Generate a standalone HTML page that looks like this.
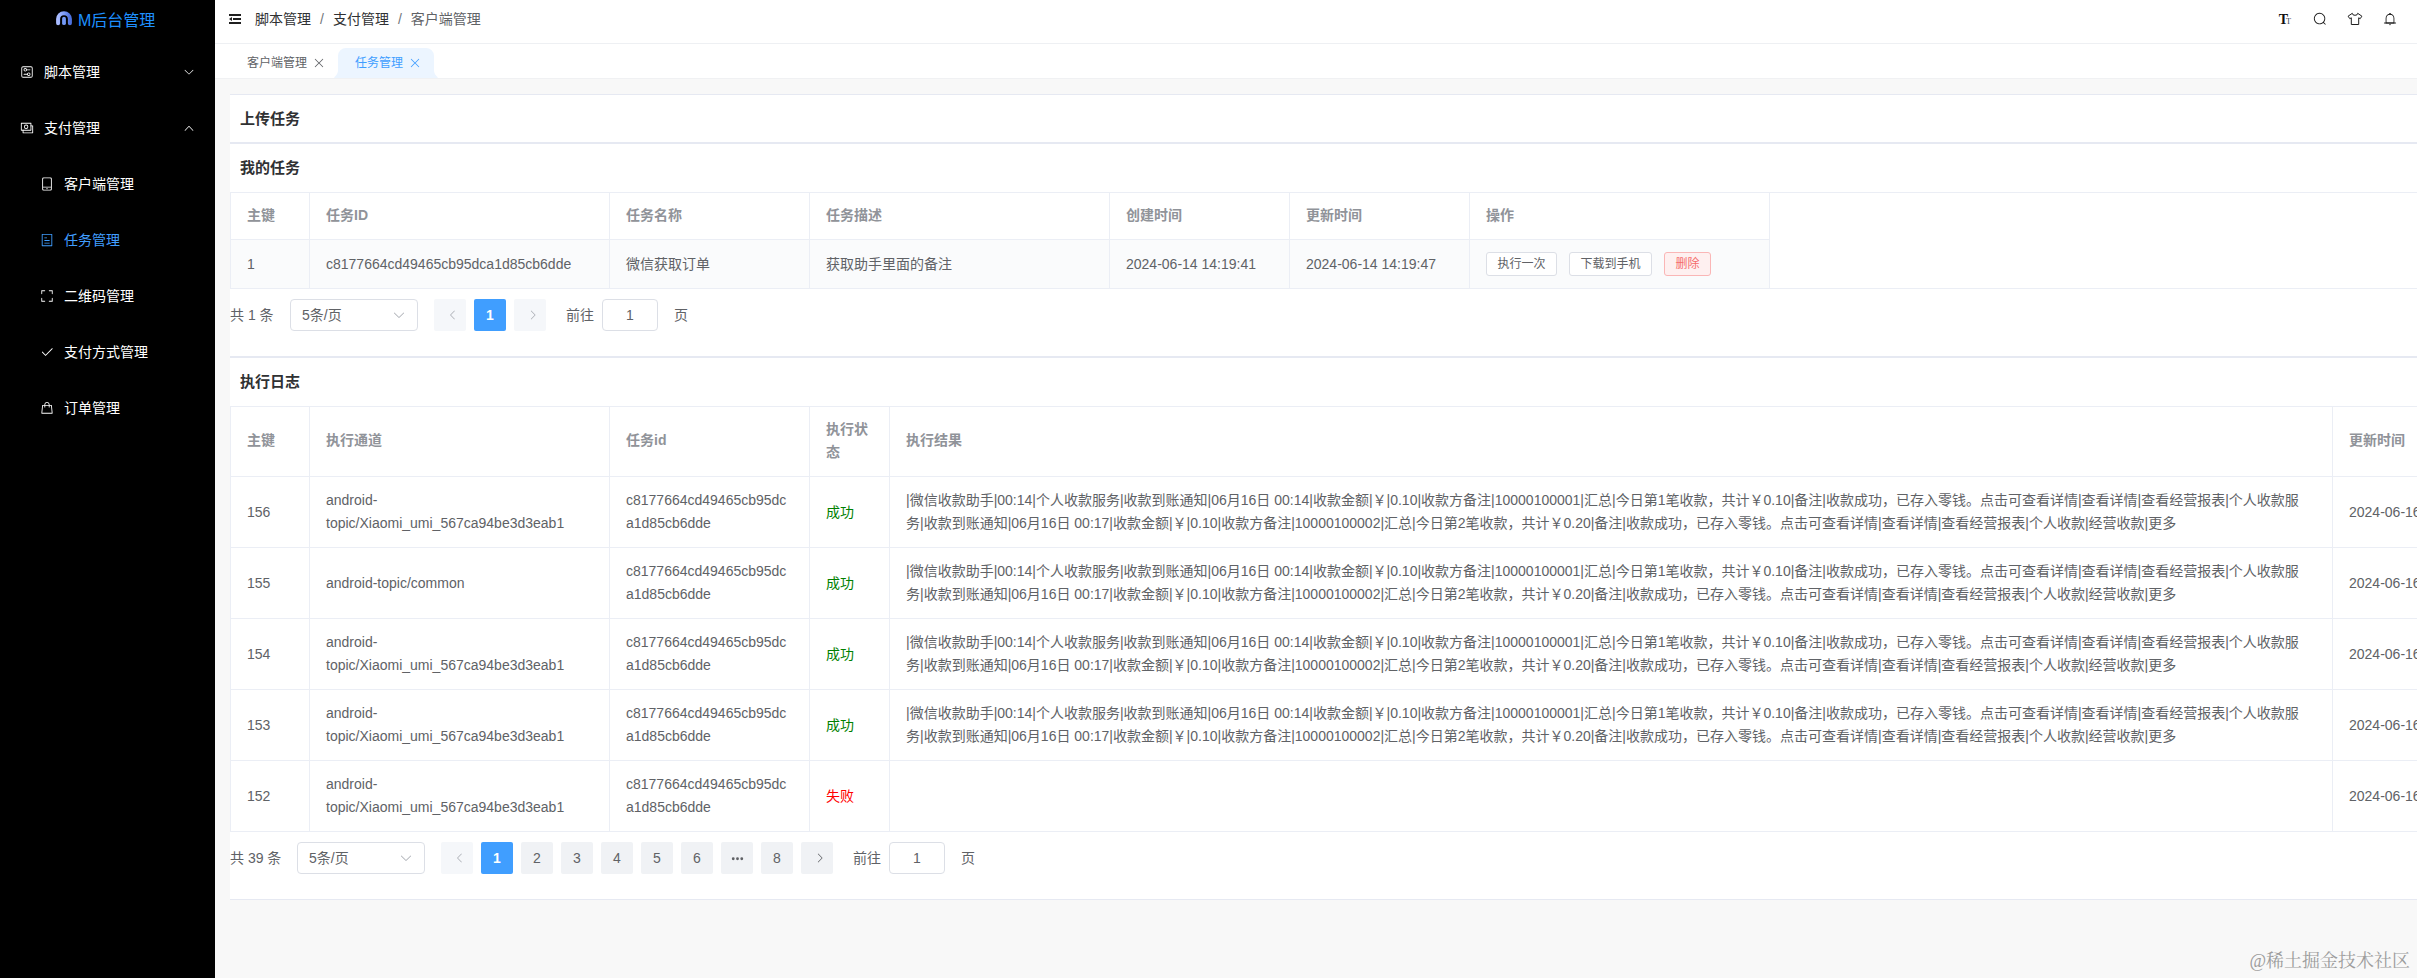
<!DOCTYPE html>
<html lang="zh-CN">
<head>
<meta charset="utf-8">
<title>M后台管理</title>
<style>
*{box-sizing:border-box;margin:0;padding:0}
html,body{width:2417px;height:978px;overflow:hidden;background:#f8f8f8}
body{font-family:"Liberation Sans","Noto Sans CJK SC",sans-serif;font-size:14px;color:#606266;position:relative}
.abs{position:absolute}
/* sidebar */
#side{position:absolute;left:0;top:0;width:215px;height:978px;background:#000;color:#fff}
#logo{position:absolute;left:56px;top:13px;height:16px;display:flex;align-items:center}
#logo span{color:#1e90ff;font-size:16px;margin-left:6px;line-height:16px;white-space:nowrap}
.mi{position:absolute;left:0;width:215px;height:56px;line-height:56px;font-size:14px;color:#fff;white-space:nowrap}
.mi svg.ic{position:absolute;top:21px;width:14px;height:14px}
.mi .tx{position:absolute;top:0}
.mi.top svg.ic{left:20px}.mi.top .tx{left:44px}
.mi.sub svg.ic{left:40px}.mi.sub .tx{left:64px}
.mi svg.ar{position:absolute;left:183px;top:22px;width:12px;height:12px}
.mi.act{color:#409eff}
/* header */
#head{position:absolute;left:215px;top:0;width:2202px;height:44px;background:#fff;border-bottom:1px solid #eef0f3}
#bc{position:absolute;left:40px;top:0;height:38px;line-height:38px;font-size:14px;color:#303133;white-space:nowrap}
#bc i{font-style:normal;color:#72767b;margin:0 9px;font-weight:400}
#bc .last{color:#606266}
#tabs{position:absolute;left:215px;top:44px;width:2202px;height:35px;background:#fff;border-bottom:1px solid #f0f1f3}
.tab{position:absolute;top:4px;height:30px;line-height:30px;font-size:12px;color:#606266;white-space:nowrap}
.tab.on{color:#409eff}
/* cards */
.card{position:absolute;left:230px;width:2190px;background:#fff;border:1px solid #e6e9f2;border-right:0;border-left:0}
.card h3{position:absolute;left:10px;font-size:15px;line-height:20px;font-weight:700;color:#303133;white-space:nowrap}
table{border-collapse:collapse;table-layout:fixed;position:absolute;left:0}
th,td{border:1px solid #ebeef5;padding:0 16px;text-align:left;vertical-align:middle;font-size:14px;line-height:23px;color:#606266;word-break:break-all;font-weight:400}
th{color:#909399;font-weight:700;background:#fff;padding-bottom:2px}
/* pagination */
.pg{position:absolute;left:0;height:32px;line-height:32px;font-size:14px;color:#606266;white-space:nowrap}
.pg>*{position:absolute;top:0;height:32px}
.sel{border:1px solid #dcdfe6;border-radius:4px;width:128px;background:#fff;padding-left:11px;color:#606266;line-height:30px}
.btn{width:32px;border-radius:2px;background:#f0f2f5;text-align:center;color:#606266}
.btn.on{background:#409eff;color:#fff;font-weight:700}
.inp{border:1px solid #dcdfe6;border-radius:4px;width:56px;background:#fff;text-align:center;line-height:30px}
.btn svg,.sel svg{position:absolute}

.card{overflow:hidden}
.hl{position:absolute;left:0;width:2190px;height:1px;background:#ebeef5}
tr.h1 th{height:47px}tr.r1 td{height:49px;background:#fafbfc}
tr.h2 th{height:70px}tr.r2 td{height:71px}
td.nw{white-space:nowrap;word-break:normal}
.sb{display:inline-block;vertical-align:middle;height:24px;line-height:22px;padding:0 10.5px;font-size:12px;border:1px solid #dcdfe6;border-radius:3px;background:#fff;color:#606266;margin-right:12px;white-space:nowrap}
.sb.del{background:#fef0f0;border-color:#fab6b6;color:#f56c6c}
#wm{position:absolute;right:7px;top:948px;font-family:"Liberation Serif","Noto Serif CJK SC",serif;font-size:18px;line-height:26px;color:#9c9c9c;white-space:nowrap}
</style>
</head>
<body>
<div id="side">
  <div id="logo">
    <svg width="16" height="15" viewBox="0 0 16 15" style="position:relative;top:-2.3px"><defs><linearGradient id="lg" x1="0" y1="0" x2="1" y2="0"><stop offset="0" stop-color="#a9bcff"/><stop offset=".5" stop-color="#7f9dfa"/><stop offset="1" stop-color="#4f72dd"/></linearGradient></defs><path d="M2.1 12.2V8.1a5.9 5.9 0 0 1 11.8 0v4.1" fill="none" stroke="url(#lg)" stroke-width="4" stroke-linecap="round"/><path d="M8 7.6v4.6" fill="none" stroke="#7398f5" stroke-width="3.8" stroke-linecap="round"/></svg>
    <span>M后台管理</span>
  </div>
  <div class="mi top" style="top:44px"><svg class="ic" viewBox="0 0 1024 1024" fill="currentColor"><path d="M224 160a64 64 0 0 0-64 64v576a64 64 0 0 0 64 64h576a64 64 0 0 0 64-64V224a64 64 0 0 0-64-64zm0-64h576a128 128 0 0 1 128 128v576a128 128 0 0 1-128 128H224A128 128 0 0 1 96 800V224A128 128 0 0 1 224 96"/><path d="M384 416a64 64 0 1 0 0-128 64 64 0 0 0 0 128m0 64a128 128 0 1 1 0-256 128 128 0 0 1 0 256"/><path d="M480 320h256q32 0 32 32t-32 32H480q-32 0-32-32t32-32m160 416a64 64 0 1 0 0-128 64 64 0 0 0 0 128m0 64a128 128 0 1 1 0-256 128 128 0 0 1 0 256"/><path d="M288 640h256q32 0 32 32t-32 32H288q-32 0-32-32t32-32"/></svg><span class="tx">脚本管理</span><svg class="ar" viewBox="0 0 1024 1024" fill="currentColor"><path d="M831.872 340.864 512 652.672 192.128 340.864a30.592 30.592 0 0 0-42.752 0 29.12 29.12 0 0 0 0 41.6L489.664 714.24a32 32 0 0 0 44.672 0l340.288-331.712a29.12 29.12 0 0 0 0-41.728 30.592 30.592 0 0 0-42.752 0z"/></svg></div>
  <div class="mi top" style="top:100px"><svg class="ic" viewBox="0 0 1024 1024" fill="currentColor"><path d="M256 640v192h640V384H768v-64h150.976c14.272 0 19.456 1.472 24.64 4.288a29.056 29.056 0 0 1 12.16 12.096c2.752 5.184 4.224 10.368 4.224 24.64v493.952c0 14.272-1.472 19.456-4.288 24.64a29.056 29.056 0 0 1-12.096 12.16c-5.184 2.752-10.368 4.224-24.64 4.224H233.024c-14.272 0-19.456-1.472-24.64-4.288a29.056 29.056 0 0 1-12.16-12.096c-2.688-5.184-4.224-10.368-4.224-24.576V640z"/><path d="M768 192H128v448h640zm64-22.976v493.952c0 14.272-1.472 19.456-4.288 24.64a29.056 29.056 0 0 1-12.096 12.16c-5.184 2.752-10.368 4.224-24.64 4.224H105.024c-14.272 0-19.456-1.472-24.64-4.288a29.056 29.056 0 0 1-12.16-12.096C65.536 682.432 64 677.248 64 663.04V169.024c0-14.272 1.472-19.456 4.288-24.64a29.056 29.056 0 0 1 12.096-12.16C85.568 129.536 90.752 128 104.96 128h685.952c14.272 0 19.456 1.472 24.64 4.288a29.056 29.056 0 0 1 12.16 12.096c2.752 5.184 4.224 10.368 4.224 24.64z"/><path d="M448 576a160 160 0 1 1 0-320 160 160 0 0 1 0 320m0-64a96 96 0 1 0 0-192 96 96 0 0 0 0 192"/></svg><span class="tx">支付管理</span><svg class="ar" viewBox="0 0 1024 1024" fill="currentColor"><path d="m488.832 344.32-339.84 356.672a32 32 0 0 0 0 44.16l.384.384a29.44 29.44 0 0 0 42.688 0l320-335.872 319.872 335.872a29.44 29.44 0 0 0 42.688 0l.384-.384a32 32 0 0 0 0-44.16L535.168 344.32a32 32 0 0 0-46.336 0"/></svg></div>
  <div class="mi sub" style="top:156px"><svg class="ic" viewBox="0 0 1024 1024" fill="currentColor"><path d="M224 768v96.064a64 64 0 0 0 64 64h448a64 64 0 0 0 64-64V768zm0-64h576V160a64 64 0 0 0-64-64H288a64 64 0 0 0-64 64zm32 288a96 96 0 0 1-96-96V128a96 96 0 0 1 96-96h512a96 96 0 0 1 96 96v768a96 96 0 0 1-96 96zm304-144a48 48 0 1 1-96 0 48 48 0 0 1 96 0"/></svg><span class="tx">客户端管理</span></div>
  <div class="mi sub act" style="top:212px"><svg class="ic" viewBox="0 0 1024 1024" fill="currentColor"><path d="M192 128v768h640V128zm-32-64h704a32 32 0 0 1 32 32v832a32 32 0 0 1-32 32H160a32 32 0 0 1-32-32V96a32 32 0 0 1 32-32m160 448h384v64H320zm0-192h192v64H320zm0 384h384v64H320z"/></svg><span class="tx">任务管理</span></div>
  <div class="mi sub" style="top:268px"><svg class="ic" viewBox="0 0 1024 1024" fill="currentColor"><path d="m160 96.064 192 .192a32 32 0 0 1 0 64l-192-.192V352a32 32 0 0 1-64 0V96h64zm0 831.872V928H96V672a32 32 0 1 1 64 0v191.936l192-.192a32 32 0 1 1 0 64zM864 96.064V96h64v256a32 32 0 1 1-64 0V160.064l-192 .192a32 32 0 1 1 0-64l192-.192zm0 831.872-192-.192a32 32 0 0 1 0-64l192 .192V672a32 32 0 1 1 64 0v256h-64z"/></svg><span class="tx">二维码管理</span></div>
  <div class="mi sub" style="top:324px"><svg class="ic" viewBox="0 0 1024 1024" fill="currentColor"><path d="M406.656 706.944 195.84 496.256a32 32 0 1 0-45.248 45.248l256 256 512-512a32 32 0 0 0-45.248-45.248L406.592 706.944z"/></svg><span class="tx">支付方式管理</span></div>
  <div class="mi sub" style="top:380px"><svg class="ic" viewBox="0 0 1024 1024" fill="currentColor"><path d="M320 288v-22.336C320 154.688 405.504 64 512 64s192 90.688 192 201.664v22.4h131.072a32 32 0 0 1 31.808 28.8l57.6 576a32 32 0 0 1-31.808 35.2H131.328a32 32 0 0 1-31.808-35.2l57.6-576a32 32 0 0 1 31.808-28.8H320zm64 0h256v-22.336C640 189.248 582.272 128 512 128c-70.272 0-128 61.248-128 137.664v22.4zm-64 64H217.92l-51.2 512h690.56l-51.264-512H704v96a32 32 0 1 1-64 0v-96H384v96a32 32 0 0 1-64 0z"/></svg><span class="tx">订单管理</span></div>
</div>
<div id="head">
  <svg style="position:absolute;left:12px;top:11px;width:16px;height:16px;color:#1f1f1f" viewBox="0 0 1024 1024" fill="currentColor"><path d="M896 192H128v128h768zm0 256H384v128h512zm0 256H128v128h768zM320 384 128 512l192 128z"/></svg>
  <div id="bc">脚本管理<i>/</i>支付管理<i>/</i><span class="last">客户端管理</span></div>
  <svg style="position:absolute;left:2064px;top:12px;width:14px;height:14px;overflow:visible" viewBox="0 0 14 14"><text x="-0.3" y="12" font-family="Liberation Serif,serif" font-weight="700" font-size="14" fill="#111">T</text><text x="6.9" y="12" font-family="Liberation Serif,serif" font-weight="400" font-size="8.2" fill="#3a4656">T</text></svg>
  <svg style="position:absolute;left:2098px;top:12px;width:14px;height:14px;color:#1f1f1f" viewBox="0 0 1024 1024" fill="currentColor"><path d="m795.904 750.72 124.992 124.928a32 32 0 0 1-45.248 45.248L750.656 795.904a416 416 0 1 1 45.248-45.248zM480 832a352 352 0 1 0 0-704 352 352 0 0 0 0 704"/></svg>
  <svg style="position:absolute;left:2132px;top:12px;width:16px;height:14px;overflow:visible" viewBox="0 0 16 14" fill="none" stroke="#1f1f1f" stroke-width="1" stroke-linejoin="round"><path d="M5.3 1.3 1.1 4.2l1.7 2.5 1.5-.9v6.7h7.4V5.8l1.5.9 1.7-2.5-4.2-2.9a2.7 2 0 0 1-5.4 0z"/></svg>
  <svg style="position:absolute;left:2168px;top:12px;width:14px;height:14px;color:#1f1f1f" viewBox="0 0 1024 1024" fill="currentColor"><path d="M512 64a64 64 0 0 1 64 64v64H448v-64a64 64 0 0 1 64-64"/><path d="M256 768h512V448a256 256 0 1 0-512 0zm256-640a320 320 0 0 1 320 320v384H192V448a320 320 0 0 1 320-320"/><path d="M96 768h832q32 0 32 32t-32 32H96q-32 0-32-32t32-32m352 128h128a64 64 0 0 1-128 0"/></svg>
</div>
<div id="tabs">
  <svg style="position:absolute;left:119px;top:4px;width:104px;height:30px" viewBox="0 0 104 30"><path d="M0 30 C2 27 4 26 4 22 V8 a8 8 0 0 1 8-8 H92 a8 8 0 0 1 8 8 V22 C100 26 102 27 104 30 Z" fill="#ecf5ff"/></svg>
  <div class="tab" style="left:32px">客户端管理</div><svg style="position:absolute;left:97px;top:12px;width:14px;height:14px;color:#606266" viewBox="0 0 1024 1024" fill="currentColor"><path d="M764.288 214.592 512 466.88 259.712 214.592a31.936 31.936 0 0 0-45.12 45.12L466.752 512 214.528 764.224a31.936 31.936 0 1 0 45.12 45.184L512 557.184l252.288 252.288a31.936 31.936 0 0 0 45.12-45.12L557.12 512.064l252.288-252.352a31.936 31.936 0 1 0-45.12-45.184z"/></svg>
  <div class="tab on" style="left:140px">任务管理</div><svg style="position:absolute;left:193px;top:12px;width:14px;height:14px;color:#409eff" viewBox="0 0 1024 1024" fill="currentColor"><path d="M764.288 214.592 512 466.88 259.712 214.592a31.936 31.936 0 0 0-45.12 45.12L466.752 512 214.528 764.224a31.936 31.936 0 1 0 45.12 45.184L512 557.184l252.288 252.288a31.936 31.936 0 0 0 45.12-45.12L557.12 512.064l252.288-252.352a31.936 31.936 0 1 0-45.12-45.184z"/></svg>
</div>

<div class="card" style="top:94px;height:49px"><h3 style="top:14px">上传任务</h3></div>
<div class="card" style="top:143px;height:214px"><h3 style="top:14px">我的任务</h3>
  <div class="hl" style="top:48px"></div><div class="hl" style="top:144px"></div>
  <table style="top:48px;width:1539px">
    <colgroup><col style="width:79px"><col style="width:300px"><col style="width:200px"><col style="width:300px"><col style="width:180px"><col style="width:180px"><col style="width:300px"></colgroup>
    <tr class="h1"><th>主键</th><th>任务ID</th><th>任务名称</th><th>任务描述</th><th>创建时间</th><th>更新时间</th><th>操作</th></tr>
    <tr class="r1"><td>1</td><td>c8177664cd49465cb95dca1d85cb6dde</td><td>微信获取订单</td><td>获取助手里面的备注</td><td>2024-06-14 14:19:41</td><td>2024-06-14 14:19:47</td><td><span class="sb">执行一次</span><span class="sb">下载到手机</span><span class="sb del">删除</span></td></tr>
  </table>
  <div class="pg" style="top:155px;width:1000px"><span style="left:0">共 1 条</span><span class="sel" style="left:60px">5条/页<svg style="right:11px;top:8px;width:14px;height:14px;color:#a8abb2" viewBox="0 0 1024 1024" fill="currentColor"><path d="M831.872 340.864 512 652.672 192.128 340.864a30.592 30.592 0 0 0-42.752 0 29.12 29.12 0 0 0 0 41.6L489.664 714.24a32 32 0 0 0 44.672 0l340.288-331.712a29.12 29.12 0 0 0 0-41.728 30.592 30.592 0 0 0-42.752 0z"/></svg></span><span class="btn" style="left:204px;color:#a8abb2;background:#f5f7fa"><svg style="left:13px;top:10px;width:12px;height:12px" viewBox="0 0 1024 1024" fill="currentColor"><path d="M609.408 149.376 277.76 489.6a32 32 0 0 0 0 44.672l331.648 340.352a29.12 29.12 0 0 0 41.728 0 30.592 30.592 0 0 0 0-42.752L339.264 511.936l311.872-319.872a30.592 30.592 0 0 0 0-42.688 29.12 29.12 0 0 0-41.728 0z"/></svg></span><span class="btn on" style="left:244px">1</span><span class="btn" style="left:284px;color:#a8abb2;background:#f5f7fa"><svg style="left:13px;top:10px;width:12px;height:12px" viewBox="0 0 1024 1024" fill="currentColor"><path d="M340.864 149.312a30.592 30.592 0 0 0 0 42.752L652.736 512 340.864 831.872a30.592 30.592 0 0 0 0 42.752 29.12 29.12 0 0 0 41.728 0L714.24 534.336a32 32 0 0 0 0-44.672L382.592 149.376a29.12 29.12 0 0 0-41.728 0z"/></svg></span><span style="left:336px">前往</span><span class="inp" style="left:372px">1</span><span style="left:444px">页</span></div>
</div>
<div class="card" style="top:357px;height:543px"><h3 style="top:14px">执行日志</h3>
  <div class="hl" style="top:48px"></div><div class="hl" style="top:473px"></div>
  <table style="top:48px;width:2282px">
    <colgroup><col style="width:79px"><col style="width:300px"><col style="width:200px"><col style="width:80px"><col style="width:1443px"><col style="width:180px"></colgroup>
    <tr class="h2"><th>主键</th><th>执行通道</th><th>任务id</th><th>执行状<br>态</th><th>执行结果</th><th>更新时间</th></tr>
<tr class="r2"><td>156</td><td>android-<br>topic/Xiaomi_umi_567ca94be3d3eab1</td><td>c8177664cd49465cb95dc<br>a1d85cb6dde</td><td style="color:green">成功</td><td>|微信收款助手|00:14|个人收款服务|收款到账通知|06月16日 00:14|收款金额|￥|0.10|收款方备注|10000100001|汇总|今日第1笔收款，共计￥0.10|备注|收款成功，已存入零钱。点击可查看详情|查看详情|查看经营报表|个人收款服<br>务|收款到账通知|06月16日 00:17|收款金额|￥|0.10|收款方备注|10000100002|汇总|今日第2笔收款，共计￥0.20|备注|收款成功，已存入零钱。点击可查看详情|查看详情|查看经营报表|个人收款|经营收款|更多</td><td class="nw">2024-06-16 00:17:43</td></tr>
<tr class="r2"><td>155</td><td>android-topic/common</td><td>c8177664cd49465cb95dc<br>a1d85cb6dde</td><td style="color:green">成功</td><td>|微信收款助手|00:14|个人收款服务|收款到账通知|06月16日 00:14|收款金额|￥|0.10|收款方备注|10000100001|汇总|今日第1笔收款，共计￥0.10|备注|收款成功，已存入零钱。点击可查看详情|查看详情|查看经营报表|个人收款服<br>务|收款到账通知|06月16日 00:17|收款金额|￥|0.10|收款方备注|10000100002|汇总|今日第2笔收款，共计￥0.20|备注|收款成功，已存入零钱。点击可查看详情|查看详情|查看经营报表|个人收款|经营收款|更多</td><td class="nw">2024-06-16 00:17:43</td></tr>
<tr class="r2"><td>154</td><td>android-<br>topic/Xiaomi_umi_567ca94be3d3eab1</td><td>c8177664cd49465cb95dc<br>a1d85cb6dde</td><td style="color:green">成功</td><td>|微信收款助手|00:14|个人收款服务|收款到账通知|06月16日 00:14|收款金额|￥|0.10|收款方备注|10000100001|汇总|今日第1笔收款，共计￥0.10|备注|收款成功，已存入零钱。点击可查看详情|查看详情|查看经营报表|个人收款服<br>务|收款到账通知|06月16日 00:17|收款金额|￥|0.10|收款方备注|10000100002|汇总|今日第2笔收款，共计￥0.20|备注|收款成功，已存入零钱。点击可查看详情|查看详情|查看经营报表|个人收款|经营收款|更多</td><td class="nw">2024-06-16 00:17:43</td></tr>
<tr class="r2"><td>153</td><td>android-<br>topic/Xiaomi_umi_567ca94be3d3eab1</td><td>c8177664cd49465cb95dc<br>a1d85cb6dde</td><td style="color:green">成功</td><td>|微信收款助手|00:14|个人收款服务|收款到账通知|06月16日 00:14|收款金额|￥|0.10|收款方备注|10000100001|汇总|今日第1笔收款，共计￥0.10|备注|收款成功，已存入零钱。点击可查看详情|查看详情|查看经营报表|个人收款服<br>务|收款到账通知|06月16日 00:17|收款金额|￥|0.10|收款方备注|10000100002|汇总|今日第2笔收款，共计￥0.20|备注|收款成功，已存入零钱。点击可查看详情|查看详情|查看经营报表|个人收款|经营收款|更多</td><td class="nw">2024-06-16 00:17:43</td></tr>
<tr class="r2"><td>152</td><td>android-<br>topic/Xiaomi_umi_567ca94be3d3eab1</td><td>c8177664cd49465cb95dc<br>a1d85cb6dde</td><td style="color:red">失败</td><td></td><td class="nw">2024-06-16 00:17:43</td></tr>
  </table>
  <div class="pg" style="top:484px;width:1000px"><span style="left:0">共 39 条</span><span class="sel" style="left:67px">5条/页<svg style="right:11px;top:8px;width:14px;height:14px;color:#a8abb2" viewBox="0 0 1024 1024" fill="currentColor"><path d="M831.872 340.864 512 652.672 192.128 340.864a30.592 30.592 0 0 0-42.752 0 29.12 29.12 0 0 0 0 41.6L489.664 714.24a32 32 0 0 0 44.672 0l340.288-331.712a29.12 29.12 0 0 0 0-41.728 30.592 30.592 0 0 0-42.752 0z"/></svg></span><span class="btn" style="left:211px;color:#a8abb2;background:#f5f7fa"><svg style="left:13px;top:10px;width:12px;height:12px" viewBox="0 0 1024 1024" fill="currentColor"><path d="M609.408 149.376 277.76 489.6a32 32 0 0 0 0 44.672l331.648 340.352a29.12 29.12 0 0 0 41.728 0 30.592 30.592 0 0 0 0-42.752L339.264 511.936l311.872-319.872a30.592 30.592 0 0 0 0-42.688 29.12 29.12 0 0 0-41.728 0z"/></svg></span><span class="btn on" style="left:251px">1</span><span class="btn" style="left:291px">2</span><span class="btn" style="left:331px">3</span><span class="btn" style="left:371px">4</span><span class="btn" style="left:411px">5</span><span class="btn" style="left:451px">6</span><span class="btn" style="left:491px"><svg style="left:9.5px;top:9.5px;width:13px;height:13px" viewBox="0 0 1024 1024" fill="currentColor"><path d="M176 416a112 112 0 1 1 0 224 112 112 0 0 1 0-224m336 0a112 112 0 1 1 0 224 112 112 0 0 1 0-224m336 0a112 112 0 1 1 0 224 112 112 0 0 1 0-224"/></svg></span><span class="btn" style="left:531px">8</span><span class="btn" style="left:571px"><svg style="left:13px;top:10px;width:12px;height:12px" viewBox="0 0 1024 1024" fill="currentColor"><path d="M340.864 149.312a30.592 30.592 0 0 0 0 42.752L652.736 512 340.864 831.872a30.592 30.592 0 0 0 0 42.752 29.12 29.12 0 0 0 41.728 0L714.24 534.336a32 32 0 0 0 0-44.672L382.592 149.376a29.12 29.12 0 0 0-41.728 0z"/></svg></span><span style="left:623px">前往</span><span class="inp" style="left:659px">1</span><span style="left:731px">页</span></div>
</div>
<div id="wm">@稀土掘金技术社区</div>
</body>
</html>
